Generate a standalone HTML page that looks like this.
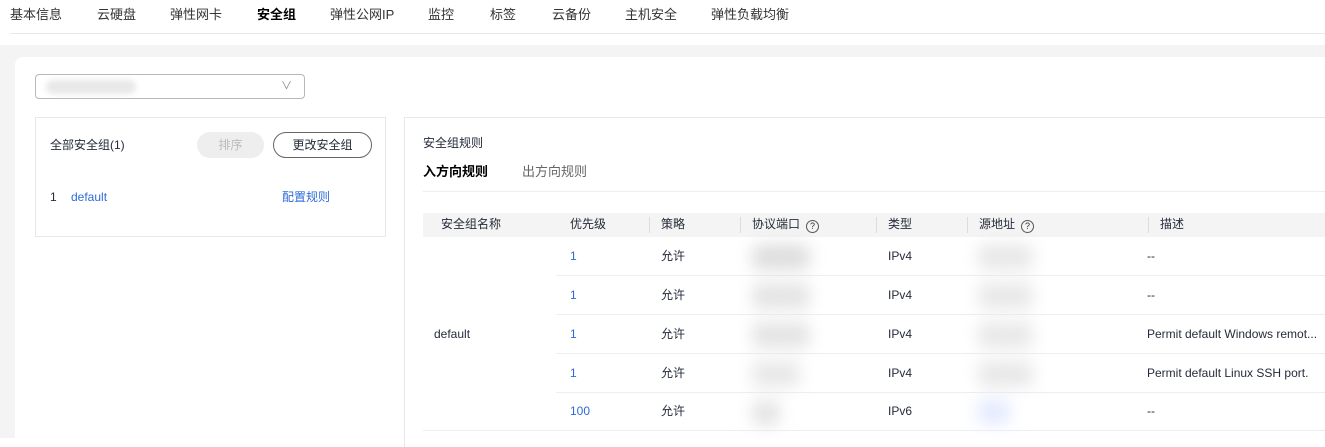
<!DOCTYPE html>
<html><head><meta charset="utf-8"><style>
*{margin:0;padding:0;box-sizing:border-box}
body{width:1325px;height:438px;overflow:hidden;background:#fff;font-family:"Liberation Sans","Noto Sans CJK SC",sans-serif;font-size:12px;line-height:16px;color:#252b3a;position:relative}
.a{position:absolute;white-space:nowrap;line-height:16px}
.tab{position:absolute;top:6px;font-size:13px;line-height:18px;color:#333}
.blue{color:#2e6bd9}
.bl{position:absolute;background:#ccc;filter:blur(8px);border-radius:8px}
.hl{position:absolute;height:1px;background:#eceef2}
.q{display:inline-block;width:13px;height:13px;border:1px solid #555;border-radius:50%;font-size:9px;text-align:center;line-height:11px;margin-left:6px;vertical-align:-1px}
</style></head><body>
<div class="tab" style="left:10px">基本信息</div>
<div class="tab" style="left:97px">云硬盘</div>
<div class="tab" style="left:170px">弹性网卡</div>
<div class="tab" style="left:257px;font-weight:bold;color:#000">安全组</div>
<div class="tab" style="left:330px">弹性公网IP</div>
<div class="tab" style="left:428px">监控</div>
<div class="tab" style="left:490px">标签</div>
<div class="tab" style="left:552px">云备份</div>
<div class="tab" style="left:625px">主机安全</div>
<div class="tab" style="left:711px">弹性负载均衡</div>
<div class="hl" style="left:10px;top:33px;width:1315px;background:#e8e8e8"></div>
<div class="a" style="left:0;top:45px;width:1325px;height:393px;background:#f4f4f4"></div>
<div class="a" style="left:15px;top:57px;width:1320px;height:390px;background:#fff;border-radius:8px"></div>
<div class="a" style="left:35px;top:74px;width:270px;height:25px;border:1px solid #b8b8b8;border-radius:4px"></div>
<div class="bl" style="left:46px;top:80px;width:90px;height:14px;background:#e8e8e8;filter:blur(3px)"></div>
<div class="a" style="left:281px;top:78px;color:#888;font-size:11px">∨</div>
<div class="a" style="left:35px;top:117px;width:351px;height:120px;border:1px solid #e8e8e8"></div>
<div class="a" style="left:50px;top:137px">全部安全组(1)</div>
<div class="a" style="left:197px;top:132px;width:67px;height:26px;border-radius:13px;background:#eee;color:#bbb;text-align:center;line-height:26px">排序</div>
<div class="a" style="left:273px;top:132px;width:99px;height:26px;border-radius:13px;border:1px solid #666;text-align:center;line-height:24px">更改安全组</div>
<div class="a" style="left:50px;top:189px">1</div>
<div class="a blue" style="left:71px;top:189px">default</div>
<div class="a blue" style="left:282px;top:189px">配置规则</div>
<div class="a" style="left:404px;top:117px;width:930px;height:330px;border-left:1px solid #e8e8e8;border-top:1px solid #e8e8e8"></div>
<div class="a" style="left:423px;top:135px">安全组规则</div>
<div class="a" style="left:423px;top:163px;font-size:13px;line-height:18px;font-weight:bold;color:#000">入方向规则</div>
<div class="a" style="left:522px;top:163px;font-size:13px;line-height:18px;color:#666">出方向规则</div>
<div class="hl" style="left:423px;top:191px;width:902px"></div>
<div class="a" style="left:423px;top:213px;width:902px;height:24px;background:#f4f4f4"></div>
<div class="a" style="left:649px;top:217px;width:1px;height:16px;background:#ddd"></div>
<div class="a" style="left:740px;top:217px;width:1px;height:16px;background:#ddd"></div>
<div class="a" style="left:876px;top:217px;width:1px;height:16px;background:#ddd"></div>
<div class="a" style="left:967px;top:217px;width:1px;height:16px;background:#ddd"></div>
<div class="a" style="left:1148px;top:217px;width:1px;height:16px;background:#ddd"></div>
<div class="a" style="left:441px;top:216px">安全组名称</div>
<div class="a" style="left:570px;top:216px">优先级</div>
<div class="a" style="left:661px;top:216px">策略</div>
<div class="a" style="left:752px;top:216px">协议端口<span class="q">?</span></div>
<div class="a" style="left:888px;top:216px">类型</div>
<div class="a" style="left:979px;top:216px">源地址<span class="q">?</span></div>
<div class="a" style="left:1160px;top:216px">描述</div>
<div class="hl" style="left:556px;top:275px;width:769px"></div>
<div class="hl" style="left:556px;top:314px;width:769px"></div>
<div class="hl" style="left:556px;top:353px;width:769px"></div>
<div class="hl" style="left:556px;top:392px;width:769px"></div>
<div class="hl" style="left:423px;top:430px;width:902px"></div>
<div class="a" style="left:434px;top:326px">default</div>
<div class="a blue" style="left:570px;top:248px">1</div><div class="a" style="left:661px;top:248px">允许</div><div class="a" style="left:888px;top:248px">IPv4</div><div class="a" style="left:1147px;top:248px">--</div>
<div class="a blue" style="left:570px;top:287px">1</div><div class="a" style="left:661px;top:287px">允许</div><div class="a" style="left:888px;top:287px">IPv4</div><div class="a" style="left:1147px;top:287px">--</div>
<div class="a blue" style="left:570px;top:326px">1</div><div class="a" style="left:661px;top:326px">允许</div><div class="a" style="left:888px;top:326px">IPv4</div><div class="a" style="left:1147px;top:326px">Permit default Windows remot...</div>
<div class="a blue" style="left:570px;top:365px">1</div><div class="a" style="left:661px;top:365px">允许</div><div class="a" style="left:888px;top:365px">IPv4</div><div class="a" style="left:1147px;top:365px">Permit default Linux SSH port.</div>
<div class="a blue" style="left:570px;top:403px">100</div><div class="a" style="left:661px;top:403px">允许</div><div class="a" style="left:888px;top:403px">IPv6</div><div class="a" style="left:1147px;top:403px">--</div>
<div class="bl" style="left:752px;top:244px;width:58px;height:26px;background:#dedede"></div>
<div class="bl" style="left:752px;top:283px;width:58px;height:26px;background:#e4e4e4"></div>
<div class="bl" style="left:752px;top:322px;width:58px;height:26px;background:#e4e4e4"></div>
<div class="bl" style="left:752px;top:361px;width:48px;height:26px;background:#e8e8e8"></div>
<div class="bl" style="left:752px;top:400px;width:28px;height:26px;background:#e4e4e4"></div>
<div class="bl" style="left:978px;top:244px;width:55px;height:26px;background:#e8e8e8"></div>
<div class="bl" style="left:978px;top:283px;width:55px;height:26px;background:#e8e8e8"></div>
<div class="bl" style="left:978px;top:322px;width:55px;height:26px;background:#e8e8e8"></div>
<div class="bl" style="left:978px;top:361px;width:55px;height:26px;background:#e8e8e8"></div>
<div class="bl" style="left:978px;top:400px;width:32px;height:24px;background:#e3e9ff"></div>
</body></html>
